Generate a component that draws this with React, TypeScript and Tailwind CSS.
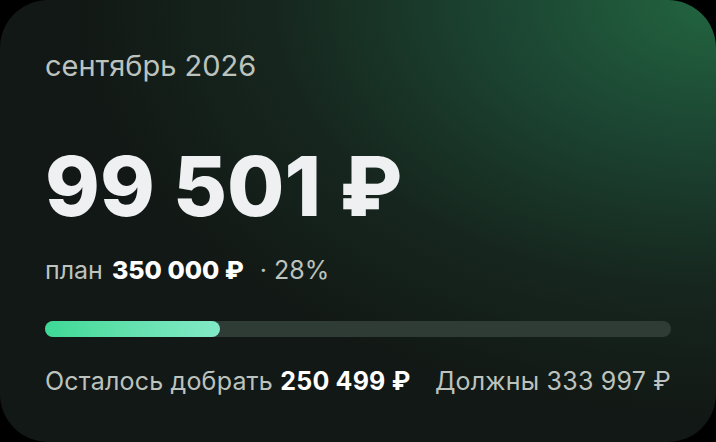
export default function App() {
  return (
    <div className="h-[442px] w-[716px] bg-black">
      <div
        className="flex h-full w-full flex-col rounded-[48px] bg-[#121714] bg-[radial-gradient(ellipse_100%_105%_at_100%_0%,#226540_0%,#1c4532_30%,#16261e_62%,#121815_90%)] px-[45px] pt-[48px] text-[#bcc3bf]"
        style={{ fontFamily: "Inter, 'Noto Sans', sans-serif" }}
      >
        {/* month */}
        <div className="text-[29px] leading-[36px]">сентябрь 2026</div>

        {/* amount */}
        <div className="mt-[52px] text-[83px] font-extrabold leading-[100px] text-[#eef0f2]">
          99 501 ₽
        </div>

        {/* plan */}
        <div className="mt-[19px] flex items-baseline text-[25px] leading-[30px]">
          <span>план</span>
          <span className="ml-[9px] font-extrabold text-white">350 000 ₽</span>
          <span className="ml-[16px]">· 28%</span>
        </div>

        {/* progress */}
        <div className="mt-[36px] h-[16px] w-full rounded-full bg-[#2f3b35]">
          <div className="h-full w-[28%] rounded-full bg-gradient-to-r from-[#3dd996] to-[#82e9c7]" />
        </div>

        {/* footer */}
        <div className="mt-[29px] flex items-baseline justify-between text-[25px] leading-[30px] tracking-[0.2px]">
          <div>
            Осталось добрать <span className="font-bold text-white">250 499 ₽</span>
          </div>
          <div>Должны 333 997 ₽</div>
        </div>
      </div>
    </div>
  );
}
